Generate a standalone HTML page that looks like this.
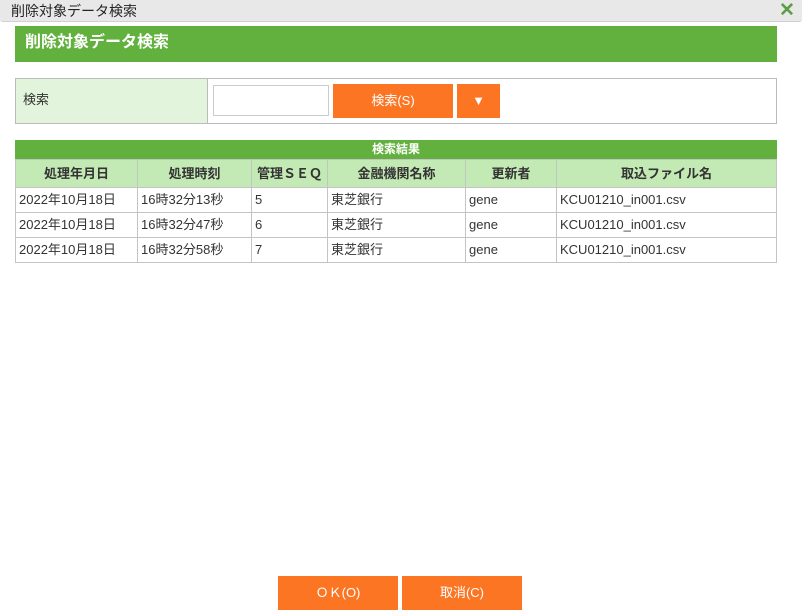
<!DOCTYPE html>
<html><head><meta charset="utf-8"><style>
*{box-sizing:border-box;margin:0;padding:0}
body{width:802px;height:615px;background:#fff;font-family:"Liberation Sans","Noto Sans CJK JP",sans-serif;font-size:13px;color:#333;position:relative;overflow:hidden}
.tb{position:absolute;left:0;top:0;width:802px;height:22px;background:#e8e8e8;border-bottom:1px solid #d0d0d0;border-radius:0 0 3px 3px}
.tb span{position:absolute;left:11px;top:1px;font-size:14px;color:#222;line-height:20px}
.x{position:absolute;left:779px;top:1px;color:#5a9e48;font-size:19px;font-weight:bold;line-height:20px}
.gh{position:absolute;left:15px;top:26px;width:762px;height:36px;background:#62b13f;color:#fff;font-weight:bold;font-size:16px;padding:7px 10px;line-height:20px}
.st{position:absolute;left:15px;top:78px;width:762px;height:46px;border:1px solid #bbb}
.st .lb{position:absolute;left:0;top:0;width:192px;height:44px;background:#e3f4dc;border-right:1px solid #bbb;padding:12px 7px;line-height:18px}
.inp{position:absolute;left:197px;top:6px;width:116px;height:31px;border:1px solid #ccc}
.btn{position:absolute;background:#fc7523;color:#fff;text-align:center}
.rh{position:absolute;left:15px;top:140px;width:762px;height:19px;background:#62b13f;color:#fff;font-weight:bold;font-size:12px;text-align:center;line-height:19px}
table{position:absolute;left:15px;top:159px;width:762px;border-collapse:collapse}
td,th{border:1px solid #c4c4c4;height:25px;padding:0 3px;font-weight:normal;text-align:left;white-space:nowrap;line-height:18px;vertical-align:middle}
th{background:#c3e9b5;text-align:center;font-weight:bold;height:28px}
</style></head><body>
<div class="tb"><span>削除対象データ検索</span></div><div class="x">✕</div>
<div class="gh">削除対象データ検索</div>
<div class="st"><div class="lb">検索</div><div class="inp"></div>
<div class="btn" style="left:317px;top:5px;width:120px;height:34px;line-height:34px">検索(S)</div>
<div class="btn" style="left:441px;top:5px;width:43px;height:34px;line-height:34px;font-size:13px">▼</div></div>
<div class="rh">検索結果</div>
<table>
<tr><th style="width:122px">処理年月日</th><th style="width:114px">処理時刻</th><th style="width:76px">管理ＳＥＱ</th><th style="width:138px">金融機関名称</th><th style="width:91px">更新者</th><th>取込ファイル名</th></tr>
<tr><td>2022年10月18日</td><td>16時32分13秒</td><td>5</td><td>東芝銀行</td><td>gene</td><td>KCU01210_in001.csv</td></tr>
<tr><td>2022年10月18日</td><td>16時32分47秒</td><td>6</td><td>東芝銀行</td><td>gene</td><td>KCU01210_in001.csv</td></tr>
<tr><td>2022年10月18日</td><td>16時32分58秒</td><td>7</td><td>東芝銀行</td><td>gene</td><td>KCU01210_in001.csv</td></tr>
</table>
<div class="btn" style="left:278px;top:576px;width:120px;height:34px;line-height:34px">ＯＫ(O)</div>
<div class="btn" style="left:402px;top:576px;width:120px;height:34px;line-height:34px">取消(C)</div>
</body></html>
